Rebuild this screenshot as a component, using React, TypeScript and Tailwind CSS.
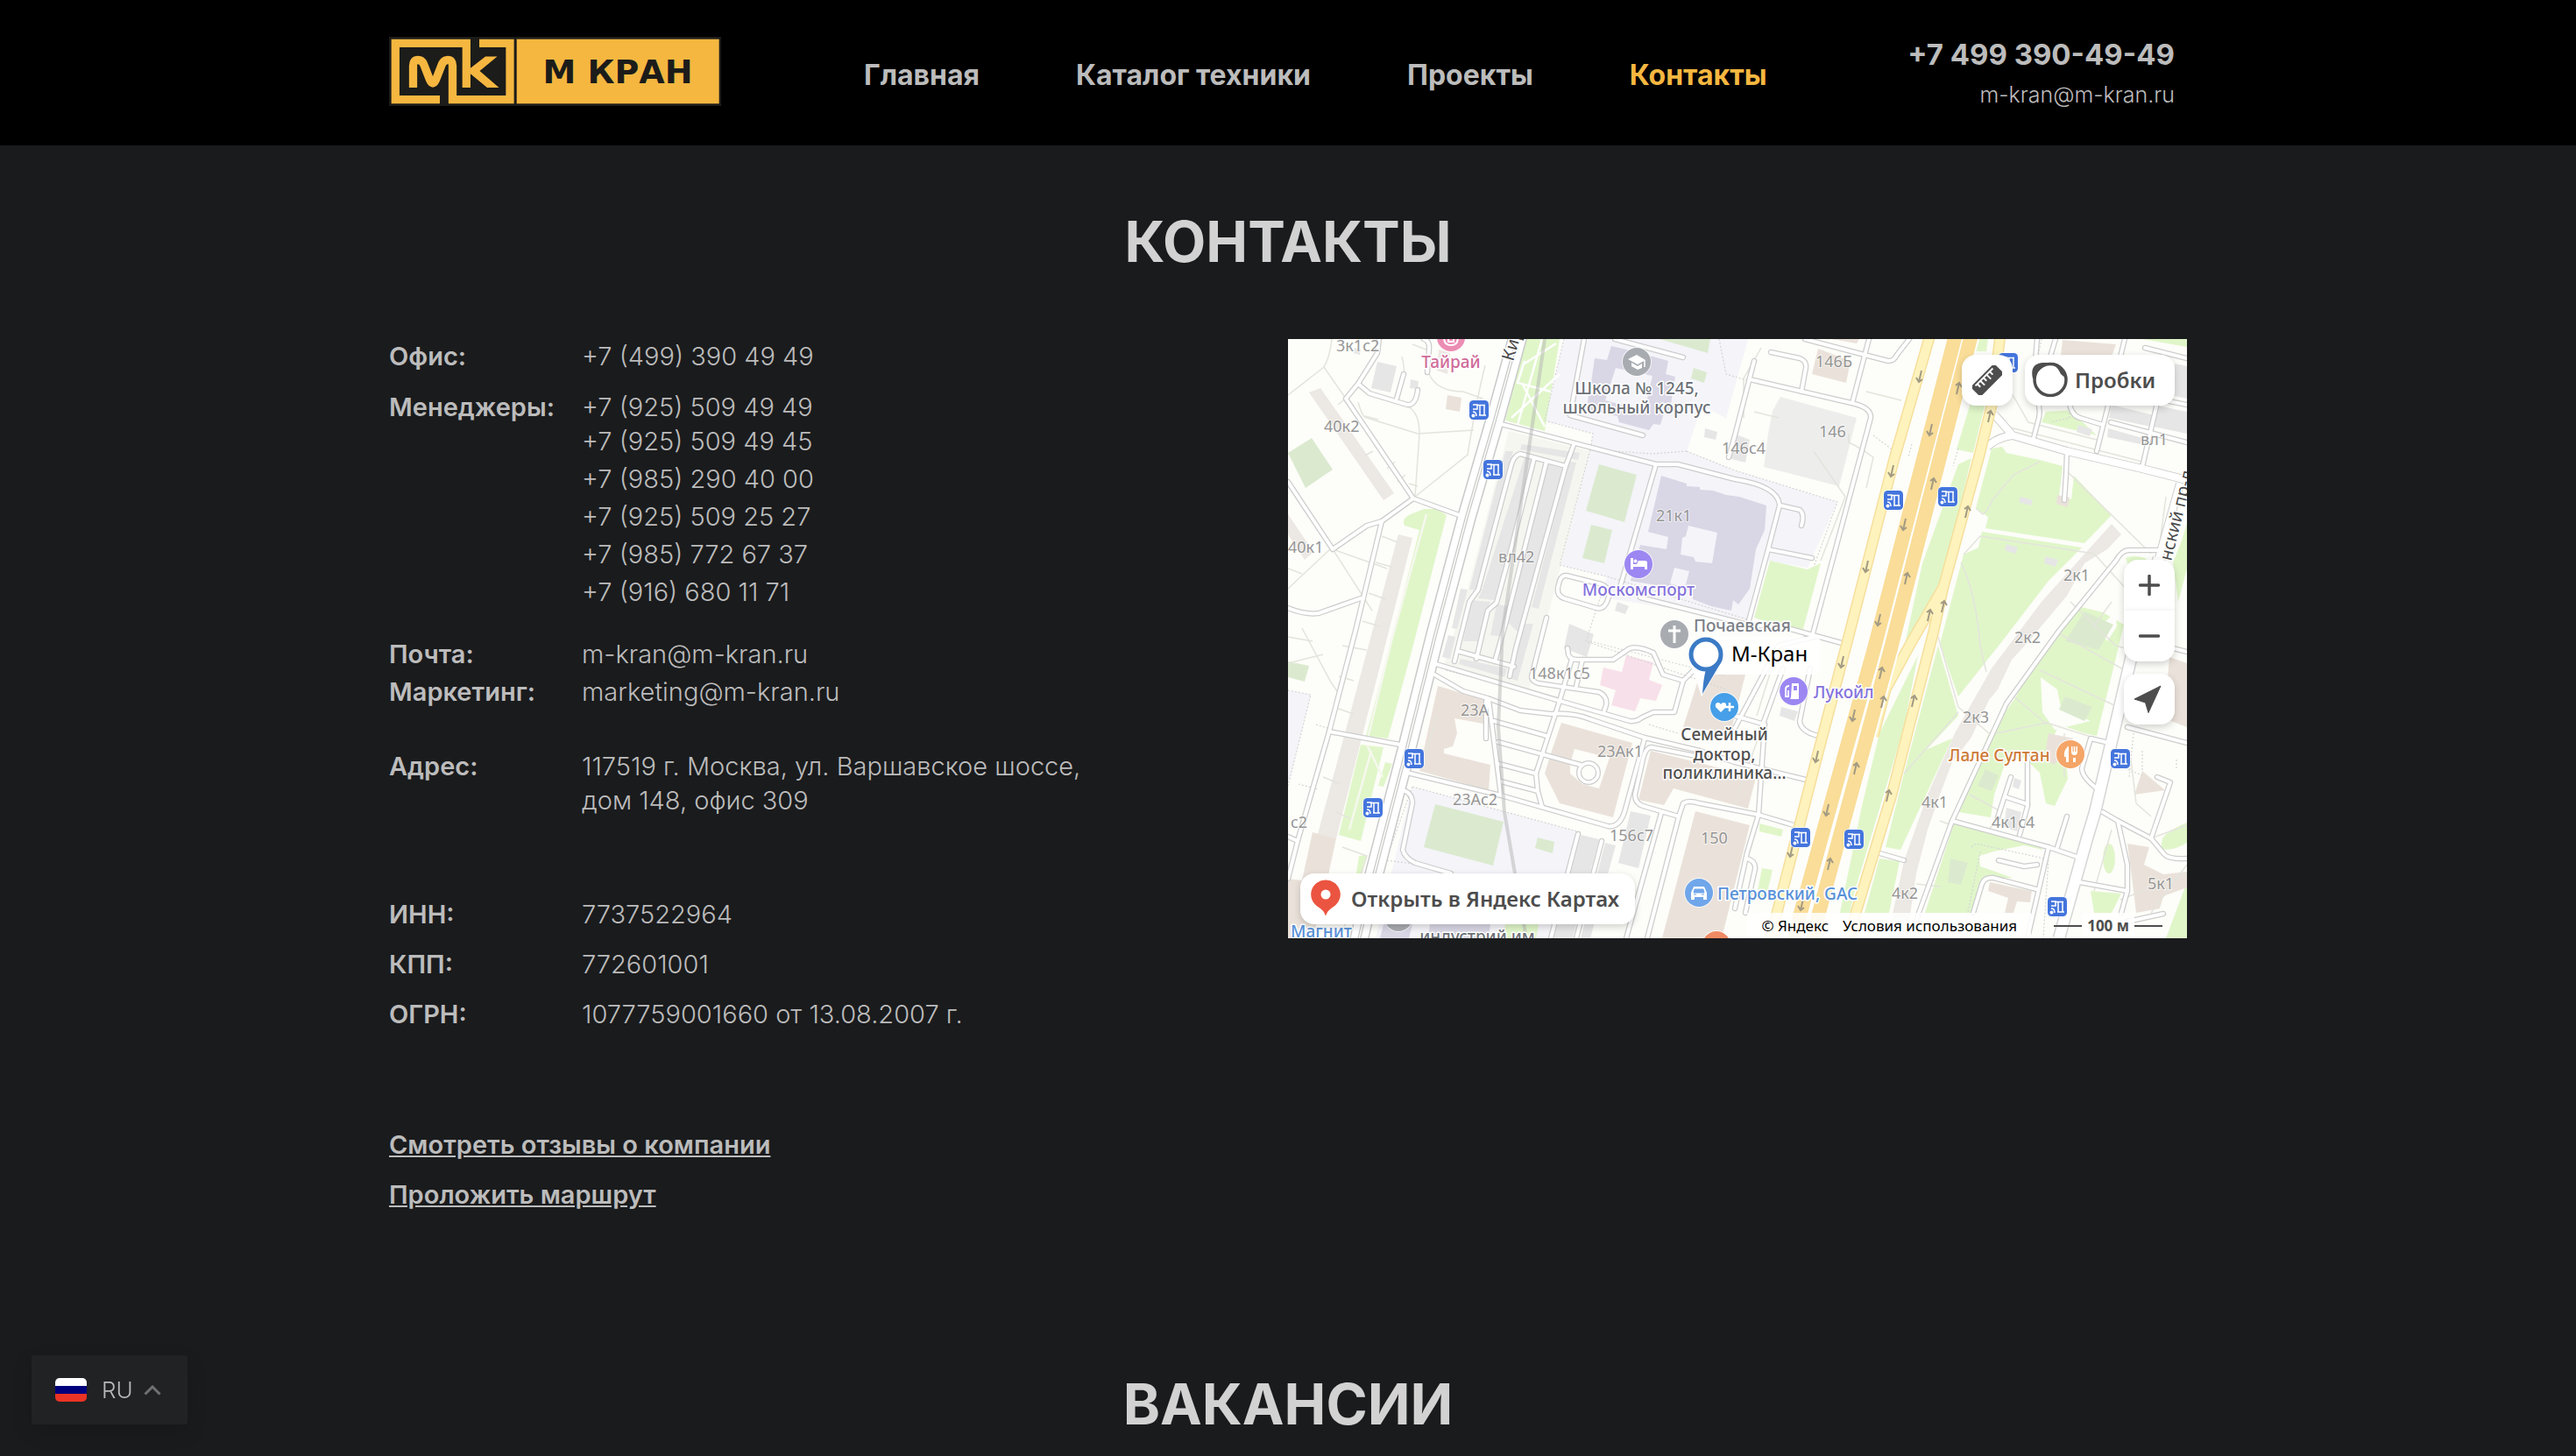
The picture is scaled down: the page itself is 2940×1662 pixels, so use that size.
import React, { useState } from 'react';

const NAV = [
    { label: 'Главная', href: '#home', active: false },
    { label: 'Каталог техники', href: '#catalog', active: false },
    { label: 'Проекты', href: '#projects', active: false },
    { label: 'Контакты', href: '#contacts', active: true },
];

const MANAGERS = [
    '+7 (925) 509 49 45',
    '+7 (985) 290 40 00',
    '+7 (925) 509 25 27',
    '+7 (985) 772 67 37',
    '+7 (916) 680 11 71',
];

function Logo() {
    return (
        <svg viewBox="0 0 379 79" className="block h-[79px] w-[379px]" role="img" aria-label="М Кран">
            <rect width="379" height="79" fill="#1c1c1a" />
            <rect x="145.7" y="2.7" width="231" height="73.6" fill="#f5b740" />
            <g fill="none" stroke="#f5b740" strokeWidth="9.3">
                <path d="M58 71.7H7.3V7.3H88.3V58" />
                <path d="M103 7.3H138V71.7H72.5V33Q72.5 26.5 67 26.5Q62.5 26.5 60.5 31L53.5 49Q50 57 46.5 49L39.5 31Q37.5 26.5 33 26.5Q27.5 26.5 27.5 33V58" />
            </g>
            <path d="M110 22.5H123.5L103.5 39L125.5 58H112L92 41.5V36.5Z" fill="#f5b740" />
            <text x="261" y="53" textAnchor="middle" fill="#1c1c1a" className="font-['DejaVu_Sans',sans-serif] text-[38px] font-bold">
                М КРАН
            </text>
        </svg>
    );
}

/* ---------- map ---------- */

const ZONES = [
    'M315 0L293 93L348 108L345 126L310 258L364 271L358 295L527 321L548 253L593 261L627 186L510 150L455 128L472 76L500 90L525 0Z',
    'M142 511L334 563L300 684L100 684Z',
    'M0 401L26 406L2 503L0 503Z',
];

const YARDS = ['M252 105L345 128L275 400L178 372L205 286Z'];

const PARKS = [
    'M271 0H310L293 105L248 93Z',
    'M155 194L170 194L181 201L142 353L114 456L89 453L121 333L150 218L133 213Q129 205 140 200Z',
    'M83 463L109 466L83 573L58 566Z',
    'M111 483L119 485L109 511L103 510Z',
    'M81 590L90 589L84 612L78 610Z',
    'M550 253L593 263L608 256L587 335L532 318Z',
    'M779 73H796L782 130L763 126Z',
    'M785 0H799L797 14H782Z',
    'M765 143L780 136L745 283L703 353L724 256Z',
    'M719 361L703 443L646 633L641 655H630L655 533L675 450Z',
    'M742 350L765 430L703 496Z',
    'M758 456L699 583L682 580L703 496L725 470Z',
    'M675 593L698 596L686 655H658Z',
    'M803 125L815 123L820 130L858 138L884 145L880 180L894 183L897 156L940 201L909 233L796 216L799 203L785 193Z',
    'M792 220L906 238L868 276L815 345L765 408L744 348L771 246L788 238Z',
    'M906 306L930 312L954 326L941 380L923 453L909 450L880 440L868 466L889 490L890 502L875 533L865 530L858 495L840 478L820 480L806 520L802 546L765 540L779 500L800 450L830 410L850 370L880 335Z',
    'M761 550L830 567L854 573L861 583L840 578L805 585L789 590L790 602L827 615L792 616L785 655H727Z',
    'M916 630L951 633L940 655H920Z',
    'M998 570Q1005 560 1026 552V575Q1010 585 996 582Z',
    'M1002 684L1026 620V684Z',
    'M865 83L899 81L904 92L923 110L860 95Z',
    'M975 0H1026V9Z',
    'M248 668H286L283 684H245Z',
    'M956 250Q965 246 978 250L990 262V320L975 300Z',
    'M538 553L565 560L563 568L538 562Z',
    'M541 604L553 606L545 640L534 640Z',
    'M1010 255L1020 230L1026 210V262L1016 300Z',
];

const FIELDS = [
    'M0 130L27 113L51 149L20 170Z',
    'M355 143L398 155L384 209L340 196Z',
    'M346 212L370 218L361 256L336 250Z',
    'M424 0H482L479 16Z',
    'M463 33L478 38L475 50L460 45Z',
    'M0 368L24 373L19 391L0 386Z',
    'M168 531L246 551L234 601L155 580Z',
    'M285 569L304 574L302 587L282 581Z',
    'M909 311L942 326L925 355L887 345Z',
    'M887 408L918 420L909 436L880 423Z',
    'M796 491L811 498L803 516L787 510Z',
    'M756 593L776 598L768 623L753 620Z',
];

const CLEARINGS = [
    'M859 386L878 400L882 420L916 436L875 446L861 426Z',
    'M925 330Q935 320 944 312L946 328L935 345Z',
];

const GREY_BUILDINGS = [
    'M102 26L124 31L117 61L95 56Z',
    'M140 46L149 48L148 57L139 56Z',
    'M76 10L83 12L82 18L75 16Z',
    'M476 102L490 106L488 115L475 112Z',
    'M509 108L527 115L522 141L503 136Z',
    'M267 120L333 130L331 138L265 126Z',
    'M248 128H257L216 286L207 286Z',
    'M270 135L280 138L252 246L235 298L217 296L222 285Z',
    'M296 143L314 148L263 335L247 320Z',
    'M321 140L329 141L286 308L278 306Z',
    'M197 285L205 286L193 331L187 330Z',
    'M210 298L231 300L217 345L200 345Z',
    'M238 303L253 305L245 340L231 338Z',
    'M183 338L191 340L185 365L176 363Z',
    'M197 365L250 376L247 386L195 371Z',
    'M264 325H280L262 390L255 388Z',
    'M321 325L349 337L341 363L315 353Z',
    'M376 300L389 305L385 314L373 310Z',
    'M391 539L414 544L400 604L377 598Z',
    'M334 566L355 571L325 684H303Z',
    'M362 575L374 578L345 684H334Z',
    'M940 75L988 87L985 100L937 90Z',
    'M992 76L1026 83V108L988 100Z',
    'M1012 28L1026 31V68L1008 64Z',
    'M936 102L975 113L973 120L935 112Z',
    'M836 180L850 184L848 190L834 186Z',
    'M820 234L833 238L830 245L818 241Z',
    'M864 248L879 252L876 260L863 256Z',
    'M820 535L837 540L832 562L817 557Z',
    'M829 501L837 504L834 514L827 511Z',
    'M902 98L918 103L915 111L900 106Z',
    'M563 420L582 425L578 436L561 430Z',
];

const PALE_BUILDINGS = [
    'M24 61L37 56L121 176L109 184Z',
    'M0 200L29 243L19 252L0 223Z',
    'M126 223L142 227L55 570L34 565Z',
    'M940 211L951 223L935 240L909 256L889 293L847 343L826 366L810 400L800 412L779 456L758 483L744 520L730 560L717 610L706 684H684L703 596L730 520L761 450L803 376L860 300Z',
    'M172 12L185 16L182 40L170 36Z',
];

const MALL = 'M562 66L649 90L629 168L543 146L548 108L553 82Z';

const BEIGE_BUILDINGS = [
    'M28 563L55 570L40 640L28 684H0V616L16 618Z',
    'M182 64L198 67L196 83L180 80Z',
    'M171 396L228 413V440L190 433L193 450L188 465L178 468V473L231 486L229 515L150 493L158 455Z',
    'M312 438L393 461L371 546L310 530L293 496L300 473ZM327 468L322 485V496L336 508L355 513L367 478Z',
    'M414 470L534 500L525 536L440 513L429 532L400 526Z',
    'M470 383H522L505 450L451 443Z',
    'M465 539L527 555L495 684H427Z',
    'M605 11L642 25L637 50L598 40Z',
    'M884 1L945 6L940 20L882 20Z',
    'M878 178L892 181L890 192L877 188Z',
    'M958 576L983 580L977 600L999 611L1026 608V626L999 636L995 650L968 655L965 630Z',
    'M975 493L1001 515L966 520Z',
    'M1006 363L1026 370V443L1000 433Z',
    'M868 450L896 456L875 486L863 480Z',
    'M801 620L849 630L847 643L832 642L828 655L818 655L822 638L799 630Z',
    'M620 0H652L649 5Z',
];

const LILAC_BUILDINGS = [
    'M369 8L395 14L434 25L431 40L442 43L436 80L429 84L425 98L417 97L412 104L378 95L376 88L341 80L343 65L346 50L350 22L364 24ZM374 33L362 70L407 82L416 42Z',
    'M426 156L455 165V168L470 169V172L485 173L500 178L515 180L546 190L544 218L534 240L527 285L514 303L508 298L506 310L483 305L462 297V288L391 276L402 235L432 240L434 226L411 220ZM457 213L454 225L450 227L448 246L463 249L465 254L484 256L490 221ZM441 261L436 279L453 284L458 265Z',
    'M109 668H142L138 684H105Z',
    'M162 668H231L229 684H160Z',
];

const PINK = 'M386 361L417 369L412 389L427 395L420 413L402 410L396 425L369 418L374 401L356 395L360 375L381 380Z';

const FOOTPATHS = [
    'M0 64L41 32Q48 20 50 0',
    'M41 32L66 68',
    'M57 75Q70 65 80 51',
    'M130 20Q134 35 132 50',
    'M132 75Q150 80 150 108L145 180',
    'M80 72Q85 90 90 90L148 108L212 104',
    'M145 180L205 132Q215 70 225 30',
    'M142 6L163 14L161 40Q170 60 200 60L222 68',
    'M51 240L96 310',
    'M51 240L113 262M0 262L16 268M0 285L48 240',
    'M88 88L103 92M97 128L88 133M122 140L113 148M134 155L125 163M138 165L148 168',
    'M107 225L125 232M100 255L118 260M92 290L112 297M85 322L105 328',
    'M16 330L48 390L56 402M0 370L40 360M0 340L28 345',
    'M170 430L155 480M62 350L90 355M58 385L75 390M52 420L75 428',
    'M62 580L90 590L60 684M40 500L60 508M55 540L72 548',
    'M640 108L640 118Q655 125 668 135L660 170M600 128L636 180L608 253',
    'M700 120L640 330M825 60L845 95L923 115',
    'M785 193L793 200Q800 195 803 185L828 155L858 140M771 246L790 225L920 245L970 300',
    'M768 255Q785 290 790 350L797 380M742 340L765 420M765 426L703 496M765 420L800 450',
    'M888 150L985 245M1002 180L994 240M820 100L840 105L975 140M975 140V148',
    'M809 450L866 438L935 460M825 405L866 440M858 378L943 418M880 336L955 378',
    'M918 330L940 300M893 300L945 350L980 360',
    'M778 520L815 540L800 560M744 550L760 556M717 622L745 625',
    'M940 560L920 630M950 640L1026 610M985 570L1026 555M962 480L968 530L985 545',
    'M985 655L1026 600M886 450V500M660 60L700 70',
    'M535 430L560 350L600 340M541 443L510 530M520 90V45L540 10M560 90L532 83',
];

const DOTTED = [
    'M293 93L348 108L345 126L310 258L364 271L527 321',
    'M455 128L415 131L345 126M455 128L510 150L627 186L600 260M315 0L293 93M492 0L500 40L540 52',
    'M358 290L340 345L500 400M180 378L360 425M142 511L110 600M142 511L334 563L300 684',
    'M0 401L26 406L0 510M32 440L48 445M12 508L34 514M113 595L142 599',
    'M780 580L785 576L868 594L862 684M965 450L960 500M975 470V493M955 490L975 498',
    'M668 110L688 125V135M712 120L708 135M765 125L759 145M1014 480V492M892 60L892 90L870 95',
    'M345 345L500 385M412 440L445 450M860 0L850 50M790 585L770 684',
];

const ROADS = [
    'M104 0L102 16L80 51L66 68L143 182L198 202',
    'M80 51L93 62L136 75Q146 76 148 58',
    'M132 40L124 68',
    'M143 182L107 208L90 213L51 240L0 163',
    'M107 208L77 333L47 448L11 573L0 616',
    'M83 296L35 313Q20 315 0 307',
    'M47 448L128 463',
    'M155 0Q162 2 161 12L159 38',
    'M0 568L11 573',
    'M243 97L420 143L445 143L510 160Q560 168 561 190L548 240L525 325',
    'M326 121L317 145L260 353L253 385',
    'M317 145L265 131Q258 133 255 143L217 286L207 300L190 368',
    'M281 136L253 246L238 301L228 310L215 365',
    'M295 140L248 326L236 368',
    'M193 356L258 374',
    'M420 143L379 283',
    'M318 270L358 280Q368 284 366 294Q362 310 352 307L315 296Q305 292 309 280Q311 269 318 270',
    'M402 295L525 326L570 330L632 347',
    'M338 0L322 87L405 110',
    'M373 0L451 21',
    'M532 25L510 110L503 135',
    'M295 318L278 385Q278 391 286 393L355 403Q365 408 363 418L361 424',
    'M169 371L310 413L390 436Q398 437 404 432L417 426H441L451 390L466 375',
    'M167 383L200 402L228 410L265 424L300 428Q325 426 345 434L407 455L470 470L510 483L591 503',
    'M319 353L320 360Q322 366 330 366L371 366L390 353Q400 350 417 358L428 383L451 390',
    'M324 365L310 413L283 496L285 516L290 534',
    'M336 366L329 396',
    'M229 411L243 521',
    'M226 413V456',
    'M235 436L295 453',
    'M240 460L334 486',
    'M241 485L283 496',
    'M243 505L285 516',
    'M136 495L243 521L365 556Q378 558 384 540L407 456',
    'M131 515Q142 518 142 530L131 583Q133 592 145 598L186 610',
    'M470 477L415 466Q408 466 405 480L396 520Q396 530 405 533L446 545L451 530Q457 526 470 530L537 543L577 555',
    'M446 545L410 684',
    'M426 541L386 684',
    'M331 565L300 684',
    'M358 573L329 684',
    'M544 440L537 543L524 586L510 650',
    'M524 593Q534 596 533 605L522 655',
    'M510 430L544 440',
    'M510 444L560 350L600 340',
    'M540 445L565 376',
    'M596 376L584 436Q585 448 605 453',
    'M590 0L658 18L685 25Q692 25 695 18L709 0',
    'M663 0L644 73',
    'M551 15L584 22Q592 25 591 33L586 60',
    'M527 46L643 73Q666 78 665 90L598 340',
    'M562 190L584 195Q590 200 586 213',
    'M548 240L598 250',
    'M855 0L850 60Q860 75 857 90L851 113',
    'M876 0L870 20',
    'M889 128L888 155L886 184',
    'M955 0L923 128',
    'M1002 30L975 146',
    'M892 74Q895 88 904 90L930 98',
    'M978 10L1026 22',
    'M939 95L1026 118',
    'M950 60L1026 75',
    'M996 241H961Q952 240 945 253L880 333L820 416L758 550L720 655L712 684',
    'M958 443L1026 461',
    'M937 461L916 456L906 490Q906 500 923 513',
    'M930 540L947 550L985 570L1000 588Q1005 594 1026 593',
    'M985 570L1007 506L992 500',
    'M947 550L958 600V630L951 655',
    'M903 620L958 630',
    'M758 550L868 580L903 592',
    'M889 545L878 580',
    'M868 580L844 684',
    'M844 476V533L835 566',
    'M825 500L810 546',
    'M820 523L844 531',
    'M811 595L840 602L855 600',
    'M782 655L792 622Q795 614 805 615L854 628',
    'M672 586L703 595',
    'M958 665L999 656',
    'M980 345L1026 357',
];

const STREETS = [
    'M806 86L827 110L889 128L975 148L1026 161',
    'M798 123Q810 112 827 110',
    'M1018 165L994 250',
];

const PROEZD = 'M994 250L962 365L921 540L912 570L880 684';
const KIROVOGRADSKAYA = 'M263 -5L236 93L204 203L168 338L136 466L98 612L80 690';

const YELLOW = [
    'M733 -5L691 140L641 335L603 480L558 655L550 690',
    'M813 -5L803 76L789 133L748 283L712 345L682 400L668 453',
    'M748 283L737 333L689 520L648 655L640 690',
];

const ORANGE = ['M762 -5L669 353L585 655L577 690', 'M780 -5L688 353L606 655L598 690'];

const ARROWS_DOWN = [
    [721, 43], [733, 104], [689, 151], [703, 212], [660, 260], [674, 321],
    [632, 369], [645, 430], [603, 477], [615, 538], [574, 585], [586, 646],
];

const ARROWS_UP = [
    [765, 56], [801, 88], [736, 165], [775, 197], [706, 273], [748, 305], [732, 315],
    [677, 381], [679, 414], [714, 413], [648, 490], [685, 521], [618, 599],
];

const STOPS = [
    [218, 81], [234, 149], [691, 184], [753, 180], [822, 27], [144, 479],
    [97, 535], [585, 569], [646, 571], [950, 479], [878, 648],
];

const HOUSES: [string, number, number][] = [
    ['3к1с2', 55, 14], ['40к2', 41, 106], ['40к1', 0, 244], ['вл42', 240, 255], ['21к1', 420, 208],
    ['146с4', 495, 131], ['146Б', 602, 32], ['146', 606, 112], ['вл1', 973, 121], ['2к1', 885, 276],
    ['2к2', 829, 347], ['2к3', 770, 438], ['4к1', 723, 535], ['4к1с4', 803, 558], ['4к2', 689, 639],
    ['5к1', 981, 628], ['148к1с5', 275, 388], ['23А', 197, 430], ['23Ак1', 353, 477], ['23Ас2', 188, 532],
    ['с2', 3, 558], ['156с7', 367, 573], ['150', 471, 576],
];

function Paths({ items, ...rest }: { items: string[] } & React.SVGProps<SVGGElement>) {
    return (
        <g {...rest}>
            {items.map((d) => (
                <path key={d} d={d} />
            ))}
        </g>
    );
}

function Poi({ x, y, color, children }: { x: number; y: number; color: string; children?: React.ReactNode }) {
    return (
        <g transform={`translate(${x} ${y})`}>
            <circle r="17" fill="#fff" fillOpacity="0.7" />
            <circle r="16" fill={color} />
            {children}
        </g>
    );
}

function CityMap() {
    return (
        <svg viewBox="0 0 1026 684" className="block h-full w-full" aria-hidden="true">
            <rect width="1026" height="684" fill="#fdfdf9" />
            <Paths items={ZONES} fill="#f4f4f9" />
            <Paths items={YARDS} fill="#f6f6f1" />
            <Paths items={PARKS} fill="#e0f6c9" />
            <Paths items={CLEARINGS} fill="#fdfdf9" />
            <Paths items={FIELDS} fill="#dbeacf" />
            <Paths items={GREY_BUILDINGS} fill="#e6e6e6" />
            <Paths items={PALE_BUILDINGS} fill="#ece8e4" />
            <path d={MALL} fill="#ededec" />
            <Paths items={BEIGE_BUILDINGS} fill="#eae2da" fillRule="evenodd" />
            <Paths items={LILAC_BUILDINGS} fill="#d9d6e5" fillRule="evenodd" />
            <path d={PINK} fill="#f8e0ea" />
            <ellipse cx="937" cy="593" rx="7" ry="17" fill="#e0f6c9" />

            <Paths items={FOOTPATHS} fill="none" stroke="#e4e4dd" strokeWidth="1.5" />
            <Paths items={DOTTED} fill="none" stroke="#d5d5d5" strokeWidth="1.2" strokeDasharray="2 2" />
            <path d="M306 5L270 28M270 25L262 50L300 60M268 52L293 100M255 90L310 40M290 0L262 98" fill="none" stroke="#fff" strokeWidth="2.5" />
            <path d="M158 200L118 345L90 460M90 463L108 500M95 470L70 560" fill="none" stroke="#f6f8ee" strokeWidth="2.5" />

            <Paths items={ROADS} fill="none" stroke="#cdcdcd" strokeWidth="6.5" strokeLinecap="round" strokeLinejoin="round" />
            <circle cx="343" cy="495" r="11" fill="#fdfdf9" stroke="#cdcdcd" strokeWidth="6" />
            <Paths items={STREETS} fill="none" stroke="#cdcdcd" strokeWidth="10" strokeLinejoin="round" />
            <path d={PROEZD} fill="none" stroke="#d6d6d6" strokeWidth="15" />
            <path d={KIROVOGRADSKAYA} fill="none" stroke="#c9c9c9" strokeWidth="22" />
            <Paths items={ROADS} fill="none" stroke="#fff" strokeWidth="4" strokeLinecap="round" strokeLinejoin="round" />
            <circle cx="343" cy="495" r="11" fill="none" stroke="#fff" strokeWidth="3.5" />
            <Paths items={STREETS} fill="none" stroke="#fff" strokeWidth="8" strokeLinejoin="round" />
            <path d={PROEZD} fill="none" stroke="#fff" strokeWidth="12" />
            <path d={KIROVOGRADSKAYA} fill="none" stroke="#fff" strokeWidth="19" />
            <path d={KIROVOGRADSKAYA} fill="none" stroke="#c9c9c9" strokeWidth="4" />
            <path d={KIROVOGRADSKAYA} fill="none" stroke="#fdfdf9" strokeWidth="1.5" />
            <path d="M293 0L245 333L240 443L247 540L259 610L272 684" fill="none" stroke="#b4b4b4" strokeOpacity="0.5" strokeWidth="4" />

            <Paths items={YELLOW} fill="none" stroke="#f6df9c" strokeWidth="13" strokeLinejoin="round" />
            <Paths items={YELLOW} fill="none" stroke="#fef3bd" strokeWidth="10" strokeLinejoin="round" />
            <Paths items={ORANGE} fill="none" stroke="#fff" strokeWidth="20" />
            <Paths items={ORANGE} fill="none" stroke="#f9dd98" strokeWidth="16" />

            <g fill="none" stroke="#a29a83" strokeWidth="2">
                {ARROWS_DOWN.map(([x, y]) => (
                    <path key={`${x}-${y}`} d="M2 -7L-1 6M-4 1L-1 6L3 3" transform={`translate(${x} ${y})`} />
                ))}
                {ARROWS_UP.map(([x, y]) => (
                    <path key={`${x}-${y}`} d="M-2 7L1 -6M-3 -3L1 -6L4 -1" transform={`translate(${x} ${y})`} />
                ))}
            </g>

            {/* house numbers */}
            <g fill="#959595" stroke="#fff" strokeOpacity="0.6" strokeWidth="2" paintOrder="stroke" className="font-['Noto_Sans',sans-serif] text-[18px]">
                {HOUSES.map(([n, x, y]) => (
                    <text key={n} x={x} y={y}>
                        {n}
                    </text>
                ))}
            </g>

            {/* street names run along the road */}
            <g fill="#4a4a4a" stroke="#fff" strokeWidth="3" paintOrder="stroke" className="font-['Noto_Sans',sans-serif] text-[20px]">
                <text transform="translate(257 26) rotate(-74)">Кир</text>
                <text transform="translate(1008 254) rotate(-76)">нский пр-д</text>
            </g>

            {STOPS.map(([x, y]) => (
                <g key={`${x}-${y}`} transform={`translate(${x} ${y})`}>
                    <rect x="-12" y="-12" width="24" height="24" rx="6" fill="#fff" fillOpacity="0.7" />
                    <rect x="-11" y="-11" width="22" height="22" rx="4.5" fill="#4475dd" />
                    <path d="M-7 -6H-2V-1H-7M-2 -5.5H7M1 -5V6H6V-5M0 6H8" fill="none" stroke="#fff" strokeWidth="1.5" />
                    <path d="M-7 2Q-3 2 -3 7" fill="none" stroke="#fff" strokeWidth="1.5" />
                    <circle cx="-6.5" cy="6.5" r="2" fill="#fff" />
                </g>
            ))}

            <Poi x={186} y={-2} color="#ec8db4">
                <path d="M-8 0Q-8 9 0 9Q8 9 8 0M-3 0V5H3V0" fill="none" stroke="#fff" strokeWidth="2" />
            </Poi>
            <Poi x={398} y={26} color="#a8acb1">
                <path d="M-10 -3L0 -8L10 -2L1 3ZM-6 1L1 5L6 2V7L1 9L-6 5Z" fill="#fff" />
                <path d="M9 -2V6" stroke="#fff" strokeWidth="1.5" />
            </Poi>
            <Poi x={400} y={257} color="#9c87f2">
                <path d="M-9 -7V6H-6V3H7V6H10V-2Q10 -4 7 -4H0L-2 0H-6V-7Z" fill="#fff" />
                <circle cx="-3.5" cy="-3.5" r="2" fill="#fff" />
            </Poi>
            <Poi x={441} y={337} color="#a8acb1">
                <path d="M0 -10V10M-7 -4H7" stroke="#fff" strokeWidth="3" />
            </Poi>
            <Poi x={577} y={402} color="#9c87f2">
                <path d="M-2 -9H6V9H-4L-3 7Z" fill="#fff" />
                <rect x="0" y="-6" width="4" height="5" fill="#9c87f2" />
                <path d="M-5 -6Q-9 -6 -9 -2V6H-6V-1" fill="none" stroke="#fff" strokeWidth="2" />
            </Poi>
            <Poi x={893} y={474} color="#f4a567">
                <path d="M-3 -9Q-8 -4 -7 3H-5V9H-2V-9ZM3 4H6V9H3ZM1 -9V-3Q1 1 4.5 1Q8 1 8 -3V-9H6.5V-3H5.3V-9H3.7V-3H2.5V-9Z" fill="#fff" />
            </Poi>
            <Poi x={469} y={632} color="#70a6ea">
                <path d="M-6 -7H6L9 0V8H5V5H-5V8H-9V0Z" fill="#fff" />
                <path d="M-5 -4H5L6 0H-6ZM-6 2H-3M3 2H6" fill="#70a6ea" stroke="#70a6ea" />
            </Poi>
            <Poi x={489} y={692} color="#ee8a64" />
            <Poi x={126} y={660} color="#a8acb1" />

            <g stroke="#fff" strokeWidth="3" strokeLinejoin="round" paintOrder="stroke" className="font-['Noto_Sans',sans-serif] text-[19px] font-medium">
                <text x="186" y="33" textAnchor="middle" fill="#cf6b98">Тайрай</text>
                <text x="398" y="63" textAnchor="middle" fill="#6d7178">Школа № 1245,</text>
                <text x="398" y="85" textAnchor="middle" fill="#6d7178">школьный корпус</text>
                <text x="400" y="293" textAnchor="middle" fill="#8472dc">Москомспорт</text>
                <text x="463" y="334" fill="#7c8087">Почаевская</text>
                <text x="600" y="410" fill="#8472dc">Лукойл</text>
                <text x="754" y="482" fill="#cd7a35">Лале Султан</text>
                <text x="490" y="640" fill="#5790d8">Петровский, GAC</text>
                <text x="3" y="683" fill="#5790d8">Магнит</text>
                <text x="216" y="689" textAnchor="middle" fill="#6d7178">индустрий им</text>
            </g>

            {/* company placemark */}
            <rect x="470" y="340" width="138" height="43" rx="6" fill="#fff" fillOpacity="0.85" />
            <Poi x={498} y={420} color="#469fe8">
                <path d="M-4 6L-10 0Q-11 -5 -7 -5Q-5 -5 -4 -3Q-3 -5 -1 -5Q3 -5 2 0Z" fill="#fff" />
                <path d="M6 -5V5M1 0H11" stroke="#fff" strokeWidth="2.5" />
            </Poi>
            <g stroke="#fff" strokeWidth="3" strokeLinejoin="round" paintOrder="stroke" fill="#4f4f4f" textAnchor="middle" className="font-['Noto_Sans',sans-serif] text-[19px] font-medium">
                <text x="498" y="458">Семейный</text>
                <text x="498" y="481">доктор,</text>
                <text x="498" y="502">поликлиника…</text>
            </g>
            <path d="M459 369L472 408L495 369Z" fill="#fff" />
            <path d="M477 377Q474 388 473 405L496 366Z" fill="#3b7ac5" />
            <circle cx="477" cy="360" r="17" fill="#fff" stroke="#3b7ac5" strokeWidth="5" />
            <text x="506" y="368" fill="#000" className="font-['Noto_Sans',sans-serif] text-[24px]">
                М-Кран
            </text>
        </svg>
    );
}

function RulerIcon() {
    return (
        <svg viewBox="0 0 34 34" className="size-[34px]" aria-hidden="true">
            <g transform="rotate(-45 17 17)">
                <rect x="-2" y="9" width="38" height="16" rx="3" fill="#4d4d4d" />
                <path d="M6 12V17M11 12V19M16 12V17M21 12V19M26 12V17M3 12H31" stroke="#fff" strokeWidth="2" />
            </g>
        </svg>
    );
}

function TrafficIcon() {
    return (
        <svg viewBox="0 0 42 40" className="h-10 w-[42px]" aria-hidden="true">
            <circle cx="22" cy="20.5" r="18" fill="none" stroke="#4d4d4d" strokeWidth="3.5" />
            <path d="M2 19Q-2 2 14 1H24L17 3.5Q5 7 4 19Z" fill="#4d4d4d" />
            <path d="M24 1Q38 2 41 20L34 14Q30 5 24 3Z" fill="#4d4d4d" />
        </svg>
    );
}

function MapWidget() {
    const btn = 'flex h-[58px] items-center bg-white shadow-[0_3px_8px_rgba(0,0,0,0.18)]';
    return (
        <section aria-label="Карта" className="relative aspect-[3/2] w-full overflow-hidden font-['Noto_Sans',sans-serif] text-[#4d4d4d]">
            <CityMap />

            <div className="absolute right-3.5 top-[18px] flex gap-3.5">
                <button type="button" aria-label="Линейка" className={`${btn} w-[58px] justify-center rounded-2xl`}>
                    <RulerIcon />
                </button>
                <button type="button" className={`${btn} w-[171px] gap-2 rounded-2xl pb-0.5 pl-[7px] text-[24px] font-semibold`}>
                    <TrafficIcon />
                    Пробки
                </button>
            </div>

            <div className="absolute right-3.5 top-[252px] flex w-[58px] flex-col">
                <button type="button" aria-label="Приблизить" className={`${btn} justify-center rounded-t-2xl`}>
                    <svg viewBox="0 0 24 24" className="size-6" aria-hidden="true">
                        <path d="M12 1.5V22.5M1.5 12H22.5" stroke="#4d4d4d" strokeWidth="3.5" strokeLinecap="round" />
                    </svg>
                </button>
                <button type="button" aria-label="Отдалить" className={`${btn} justify-center rounded-b-2xl`}>
                    <svg viewBox="0 0 24 24" className="size-6" aria-hidden="true">
                        <path d="M1.5 12H22.5" stroke="#4d4d4d" strokeWidth="3.5" strokeLinecap="round" />
                    </svg>
                </button>
                <button type="button" aria-label="Моё местоположение" className={`${btn} mt-3.5 justify-center rounded-2xl pr-1`}>
                    <svg viewBox="0 0 32 32" className="size-8" aria-hidden="true">
                        <path d="M31 1L17 31.5L13.5 20L1 16Z" fill="#4d4d4d" stroke="#4d4d4d" strokeLinejoin="round" />
                    </svg>
                </button>
            </div>

            <a href="#yandex-maps" className={`${btn} absolute bottom-4 left-3.5 w-[382px] gap-3 rounded-2xl pb-0.5 pl-3 text-[24px] font-semibold`}>
                <svg viewBox="0 0 34 42" className="h-[42px] w-[34px]" aria-hidden="true">
                    <path d="M17 0.5A16.5 16.5 0 0 1 26 31Q19 35 17 41.5Q15 35 8 31A16.5 16.5 0 0 1 17 0.5Z" fill="#eb5440" />
                    <circle cx="17" cy="17" r="5.5" fill="#fff" />
                </svg>
                Открыть в Яндекс Картах
            </a>

            <div className="absolute bottom-0 right-7 flex h-[29px] items-center text-[17px] text-black">
                <p className="flex h-full items-center gap-4 bg-white/85 px-4">
                    <span>© Яндекс</span>
                    <a href="#terms">Условия использования</a>
                </p>
                <p className="ml-[26px] flex h-full items-center font-bold text-[#4d4d4d]">
                    <span className="h-0.5 w-8 bg-[#4d4d4d]" />
                    <span className="flex h-full items-center rounded-t bg-white/85 px-1.5">100 м</span>
                    <span className="h-0.5 w-8 bg-[#4d4d4d]" />
                </p>
            </div>
        </section>
    );
}

/* ---------- page ---------- */

function Row({ label, children }: { label: string; children: React.ReactNode }) {
    return (
        <div className="flex">
            <dt className="w-[220px] shrink-0 font-semibold">{label}</dt>
            <dd>{children}</dd>
        </div>
    );
}

function LanguageSwitch() {
    const [open, setOpen] = useState(false);
    return (
        <button
            type="button"
            aria-expanded={open}
            onClick={() => setOpen(!open)}
            className="fixed bottom-9 left-9 flex h-[79px] w-[178px] items-center rounded-[3px] bg-[#212224] pl-[27px] text-[26px] font-light text-[#b9b9b9] shadow-[0_8px_24px_rgba(0,0,0,0.12)]"
        >
            <span className="flex h-[27px] w-9 flex-col overflow-hidden rounded-[5px]">
                <span className="flex-1 bg-white" />
                <span className="flex-1 bg-[#00007b]" />
                <span className="flex-1 bg-[#ea3324]" />
            </span>
            <span className="ml-[17px]">RU</span>
            <svg viewBox="0 0 20 12" className="ml-3 h-3 w-5" aria-hidden="true">
                <path d="M1.5 10.5L10 2L18.5 10.5" fill="none" stroke="#707070" strokeWidth="3" />
            </svg>
        </button>
    );
}

export default function App() {
    return (
        <div className="min-h-screen bg-[#1a1b1d] font-['Inter',sans-serif] text-[#bcbcbc]">
            <header className="bg-black">
                <div className="mx-auto flex h-[166px] max-w-[2052px] items-center">
                    <a href="#home" className="mb-1 shrink-0">
                        <Logo />
                    </a>
                    <nav className="ml-[163px] mt-1.5 flex gap-[110px] text-[32px] font-bold">
                        {NAV.map((item) => (
                            <a key={item.label} href={item.href} className={item.active ? 'text-[#f5b740]' : ''}>
                                {item.label}
                            </a>
                        ))}
                    </nav>
                    <div className="ml-auto mt-1 flex flex-col items-end pr-3.5">
                        <a href="tel:+74993904949" className="text-[33px] font-bold leading-[46px]">
                            +7 499 390-49-49
                        </a>
                        <a href="mailto:m-kran@m-kran.ru" className="text-[25px] font-light leading-[46px]">
                            m-kran@m-kran.ru
                        </a>
                    </div>
                </div>
            </header>

            <main className="mx-auto max-w-[2052px]">
                <h1 className="pt-[70px] text-center text-[64px] font-bold leading-[80px] text-[#d2d2d2]">КОНТАКТЫ</h1>

                <div className="mt-[71px] grid grid-cols-2 text-[29px] leading-[39px]">
                    <div>
                        <dl className="font-light">
                            <Row label="Офис:">+7 (499) 390 49 49</Row>
                            <div className="mt-[19px]">
                                <Row label="Менеджеры:">
                                    <span className="block">+7 (925) 509 49 49</span>
                                    <span className="flex flex-col gap-1">
                                        {MANAGERS.map((phone) => (
                                            <span key={phone}>{phone}</span>
                                        ))}
                                    </span>
                                </Row>
                            </div>
                            <div className="mt-8 flex flex-col gap-1">
                                <Row label="Почта:">m-kran@m-kran.ru</Row>
                                <Row label="Маркетинг:">marketing@m-kran.ru</Row>
                            </div>
                            <div className="mt-[46px]">
                                <Row label="Адрес:">
                                    117519 г. Москва, ул. Варшавское шоссе,
                                    <br />
                                    дом 148, офис 309
                                </Row>
                            </div>
                            <div className="mt-[91px] flex flex-col gap-[18px]">
                                <Row label="ИНН:">7737522964</Row>
                                <Row label="КПП:">772601001</Row>
                                <Row label="ОГРН:">1077759001660 от 13.08.2007 г.</Row>
                            </div>
                        </dl>
                        <div className="mt-[110px] flex flex-col items-start gap-[18px] font-semibold">
                            <a href="#reviews" className="underline">
                                Смотреть отзывы о компании
                            </a>
                            <a href="#route" className="underline">
                                Проложить маршрут
                            </a>
                        </div>
                    </div>
                    <MapWidget />
                </div>

                <h2 className="mt-[180px] text-center text-[64px] font-bold leading-[80px] text-[#d2d2d2]">ВАКАНСИИ</h2>
            </main>

            <LanguageSwitch />
        </div>
    );
}
